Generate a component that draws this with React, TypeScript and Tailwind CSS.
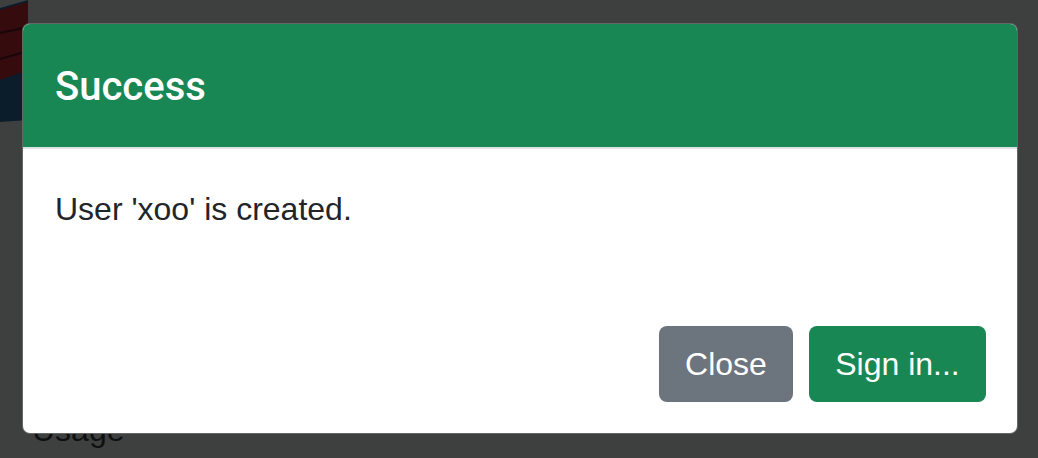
import React from 'react';

const BackdropLogo = () => (
  <svg className="absolute left-0 top-0" width="40" height="130" viewBox="0 0 40 130">
    <path d="M0 8 L28 0 L28 120 L0 122 Z" fill="#0b1c2b" />
    <path d="M0 10 L28 2 L28 26 L0 32 Z" fill="#360b0d" />
    <path d="M0 34 L28 28 L28 50 L0 58 Z" fill="#360b0d" />
    <path d="M0 60 L28 52 L28 70 L0 80 Z" fill="#360b0d" />
    <path d="M0 32 L28 26 L28 28 L0 34 Z" fill="#1e0406" />
    <path d="M0 58 L28 50 L28 52 L0 60 Z" fill="#1e0406" />
  </svg>
);

export default function App() {
  return (
    <div
      className="relative h-[458px] w-full overflow-hidden bg-[#3e4040] pl-[22px] pt-[23px]"
      style={{ fontFamily: '"Liberation Sans", Arial, sans-serif' }}
    >
      {/* page content dimmed behind the overlay */}
      <BackdropLogo />
      <span className="absolute left-[32px] top-[406px] text-[32px] leading-[48px] text-[#0e0f0f]">Usage</span>

      {/* Modal */}
      <div className="relative w-[996px] overflow-hidden rounded-[8px] border border-black/60 bg-white">
        <div className="flex h-[125px] items-center border-b-2 border-[#dee2e6] bg-[#198754] px-[32px] pt-[3px]">
          <h5
            className="text-[40px] font-medium leading-[60px] text-white"
            style={{ fontFamily: 'Roboto, "Liberation Sans", sans-serif' }}
          >
            Success
          </h5>
        </div>

        <div className="px-[32px] pb-[32px] pt-[36px]">
          <p className="mb-[29px] text-[32px] leading-[48px] text-[#212529]">User 'xoo' is created.</p>
        </div>

        <div className="flex justify-end gap-4 pb-[31px] pr-[31px] pt-[32px]">
          <button className="flex h-[76px] w-[134px] items-center justify-center rounded-[8px] bg-[#6c757d] text-[32px] text-white">
            Close
          </button>
          <button className="flex h-[76px] w-[177px] items-center justify-center rounded-[8px] bg-[#198754] text-[32px] text-white">
            Sign in...
          </button>
        </div>
      </div>
    </div>
  );
}
